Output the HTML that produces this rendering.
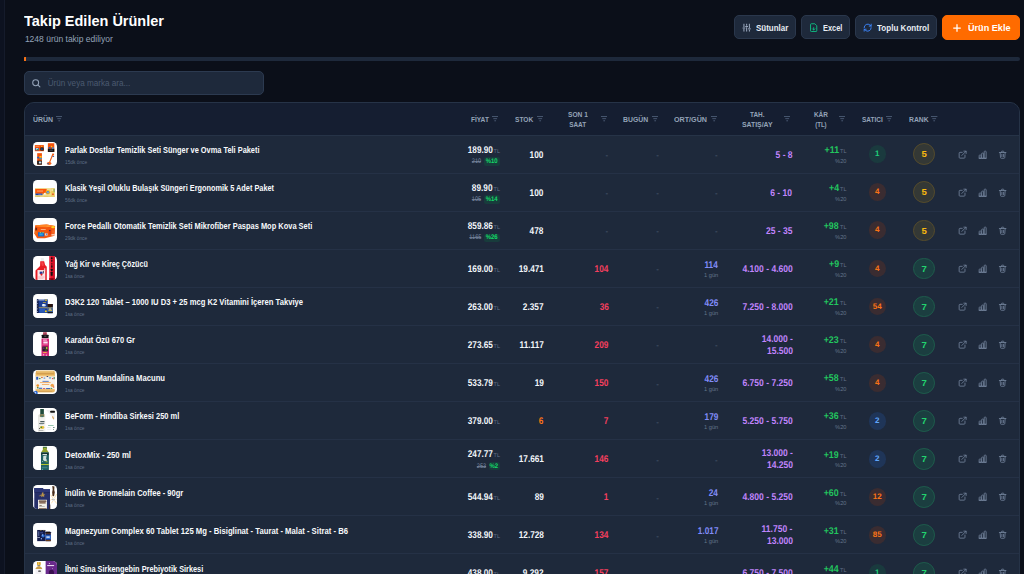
<!DOCTYPE html>
<html lang="tr"><head><meta charset="utf-8"><title>Takip Edilen Ürünler</title>
<style>
*{box-sizing:border-box;margin:0;padding:0}
html,body{width:1024px;height:574px;overflow:hidden;background:#0b0f19}
body{position:relative;font-family:"Liberation Sans",sans-serif;color:#f1f5f9;-webkit-font-smoothing:antialiased}
.t{display:inline-block;white-space:nowrap;transform-origin:0 50%}
.t.r{transform-origin:100% 50%}
.t.ctr{transform-origin:50% 50%}
i,em,u,s,b{font-style:normal;text-decoration:none;font-weight:normal}
.side{position:absolute;left:0;top:0;width:5px;height:574px;background:#0d1220;border-right:1px solid #151b2b}
h1{position:absolute;left:24px;top:12px;font-size:15px;line-height:18px;font-weight:bold;color:#fff;white-space:nowrap}
h1 .t{transform:scaleX(.967)}
.sub{position:absolute;left:24.9px;top:34.2px;font-size:8.5px;line-height:11px;color:#94a3b8;white-space:nowrap}
.btn{position:absolute;top:15px;height:24px;border-radius:5px;background:#1e293b;border:1px solid #2a374c;color:#e8edf4;font-size:9.3px;font-weight:bold;line-height:22px;white-space:nowrap}
.btn svg{position:absolute;top:6.8px;width:9.33px;height:9.33px;fill:none;stroke:#a3b1c6;stroke-width:2.5;stroke-linecap:round;stroke-linejoin:round}
.btn>span{position:absolute;top:.7px}
.btn.or{height:25px;background:#ff6b00;border-color:#ff6b00;color:#fff}
.prog{position:absolute;left:24px;top:57px;width:996px;height:4px;border-radius:.5px 2px 2px .5px;background:#1e293b;overflow:hidden}
.prog i{display:block;width:2px;height:4px;background:#f97316}
.search{position:absolute;left:24px;top:71px;width:240px;height:24px;border-radius:5px;background:#1e293b;border:1px solid #2c3a50}
.search svg{position:absolute;left:6.3px;top:5.6px;width:10.2px;height:10.2px;fill:none;stroke:#94a3b8;stroke-width:2.4;stroke-linecap:round}
.search span{position:absolute;left:22.7px;top:6px;font-size:8.15px;line-height:11px;color:#4b5a70;white-space:nowrap}
.tbl{position:absolute;left:24px;top:102px;width:996px;height:500px;border:1px solid #263347;border-radius:10px;background:#1e293b;overflow:hidden}
.thead{position:absolute;left:-1px;top:-1px;width:996px;height:34px;background:#151e31;border-bottom:1px solid #263347}
.h{position:absolute;font-size:7.3px;line-height:10px;font-weight:bold;color:#94a3b8;white-space:nowrap}
.h2{text-align:center}
.ht{transform:scaleX(.9)}
.fi{position:absolute;top:14.2px;width:6.4px;height:5.33px;fill:none;stroke:#566680;stroke-width:.75}
.row{position:absolute;left:-25px;width:1024px;height:38px;margin-top:-103px}
.sep{position:absolute;left:0;width:996px;height:1px;background:#253146;margin-top:-103px}
.th{position:absolute;left:33.1px;top:5.9px;width:24px;height:24px}
.nm{position:absolute;left:65px;top:9px;font-size:8.5px;line-height:11px;font-weight:bold;color:#f8fafc}
.n{transform:scaleX(.87)}
.ago{position:absolute;left:65px;top:23px;font-size:5.6px;line-height:7px;color:#5f6e86}
.a{transform:scaleX(.86)}
.c{position:absolute;text-align:right;white-space:nowrap;font-size:9.8px;line-height:11px;font-weight:bold;color:#f1f5f9;text-rendering:geometricPrecision}
.p{transform:scaleX(.843)}
.p.pur{transform:scaleX(.87)}
.mid{top:13.5px}
.pr{right:524px}
.pr.up{top:8.5px} .pr.dn{top:21.4px;font-size:6.7px;line-height:8.2px;height:8.2px}
.tl{font-size:5.5px;color:#64738b;margin-left:.8px;font-weight:normal}
s{display:inline-block;position:relative;top:.7px;transform:scaleX(.84);transform-origin:100% 50%;color:#7c8ba4;text-decoration:none;background:linear-gradient(#8897b0,#8897b0) 0 42%/100% .7px no-repeat;font-size:6.7px;margin-right:2.7px;font-weight:normal;vertical-align:top}
.bd{display:inline-block;background:#183c3c;color:#14d868;font-weight:bold;font-size:6.7px;line-height:8.2px;height:8.2px;border-radius:2px;width:15.8px;text-align:center;vertical-align:top}
.bt{transform:scaleX(.9);position:relative;top:.7px}
.st{right:480.5px}
.warn{color:#f97316}
.sn{right:415.29999999999995px}
.red{color:#f43f5e}
em{color:#56657c;font-weight:normal;font-size:8px;position:relative;top:.6px;margin-right:.6px}
.bu{right:364.5px}
.or{right:305.79999999999995px}
.up2{top:9.4px} .dn2{top:20.3px;line-height:8px}
u{font-size:5.7px;color:#64748b;font-weight:normal}
.blu{color:#818cf8}
.ta{right:231.5px}
.pur{color:#c084fc}
.l1{top:7.3px} .l2{top:19.4px}
.ka{right:177.5px}
.up3{top:9px;color:#22c55e} .up3 .tl{margin-left:1px}
.dn3{top:20.6px;line-height:8px}
.k{transform:scaleX(.9)}
.sel{position:absolute;left:868.5px;top:9.3px;width:17.6px;height:17.8px;border-radius:50%;text-align:center;font-size:8px;line-height:18.8px;font-weight:bold;text-rendering:geometricPrecision}
.sg{background:#1a3a3e;color:#1fcf78}
.sel.so{background:#3a2c31;color:#f97316}
.sb{background:#1f3558;color:#60a5fa}
.rk{position:absolute;left:913.3px;top:7.4px;width:21.8px;height:21.8px;border-radius:50%;text-align:center;font-size:9.6px;line-height:19.8px;font-weight:bold;border:1px solid}
.ry{background:#343835;border-color:#564c2c;color:#f7b90f}
.rg{background:#1b3e40;border-color:#1e5c4c;color:#22d36f}
.ic{position:absolute;top:13.6px;width:9.3px;height:9.3px;fill:none;stroke:#71819a;stroke-width:2.2;stroke-linecap:round;stroke-linejoin:round;margin-left:24px}
</style></head><body>
<div class="side"></div>
<h1><span class="t">Takip Edilen Ürünler</span></h1>
<div class="sub">1248 ürün takip ediliyor</div>

<div class="btn" style="left:734px;width:62px"><svg viewBox="0 0 24 24" style="left:7.3px"><path d="M5 3v7M5 16v5M12 3v3M12 12v9M19 3v9M19 18v3M2.500 13h5M9.500 9h5M16.500 15h5"/></svg><span style="left:20.6px"><span class="t" style="transform:scaleX(0.8563)">Sütunlar</span></span></div>
<div class="btn" style="left:800.5px;width:49.5px"><svg viewBox="0 0 24 24" style="left:7.4px;stroke:#10b981"><path d="M14 2H6a2 2 0 0 0-2 2v16a2 2 0 0 0 2 2h12a2 2 0 0 0 2-2V8zM12 18v-6M9 15l3 3 3-3"/></svg><span style="left:21.1px"><span class="t" style="transform:scaleX(0.7985)">Excel</span></span></div>
<div class="btn" style="left:855px;width:82px"><svg viewBox="0 0 24 24" style="left:7.3px;stroke:#3b82f6"><path d="M3 12a9 9 0 0 1 15-6.700L21 8M21 3v5h-5M21 12a9 9 0 0 1-15 6.700L3 16M3 21v-5h5"/></svg><span style="left:21px"><span class="t" style="transform:scaleX(0.8664)">Toplu Kontrol</span></span></div>
<div class="btn or" style="left:942px;width:78px"><svg viewBox="0 0 24 24" style="left:8.3px;top:5.8px;width:12px;height:12px;stroke:#fff;stroke-width:2.5;stroke-linecap:butt"><path d="M12 4.500v15M4.500 12h15"/></svg><span style="left:25px;top:1.2px"><span class="t" style="transform:scaleX(0.9791)">Ürün Ekle</span></span></div>

<div class="prog"><i></i></div>
<div class="search"><svg viewBox="0 0 24 24"><circle cx="11" cy="11" r="7"/><path d="m21 21-4.3-4.3"/></svg><span>Ürün veya marka ara...</span></div>

<div class="tbl">
<div class="thead"><div class="h" style="left:9px;top:13.1px"><span class="t ht" style="transform:scaleX(0.9529)">ÜRÜN</span></div><svg class="fi" viewBox="0 0 6 5" style="left:31.5px"><path d="M0 .5h6M1.200 2.500h3.600M2.200 4.500h1.600"/></svg><div class="h" style="left:446.5px;top:13.1px"><span class="t ht" style="transform:scaleX(0.9006)">FİYAT</span></div><svg class="fi" viewBox="0 0 6 5" style="left:468px"><path d="M0 .5h6M1.200 2.500h3.600M2.200 4.500h1.600"/></svg><div class="h" style="left:490.79999999999995px;top:13.1px"><span class="t ht" style="transform:scaleX(0.9036)">STOK</span></div><svg class="fi" viewBox="0 0 6 5" style="left:512.5px"><path d="M0 .5h6M1.200 2.500h3.600M2.200 4.500h1.600"/></svg><div class="h h2" style="left:523.7px;width:60px;top:8px"><span class="t ht ctr" style="transform:scaleX(0.9084)">SON 1</span></div><div class="h h2" style="left:523.7px;width:60px;top:18px"><span class="t ht ctr" style="transform:scaleX(0.8795)">SAAT</span></div><svg class="fi" viewBox="0 0 6 5" style="left:577px"><path d="M0 .5h6M1.200 2.500h3.600M2.200 4.500h1.600"/></svg><div class="h" style="left:599px;top:13.1px"><span class="t ht" style="transform:scaleX(0.9378)">BUGÜN</span></div><svg class="fi" viewBox="0 0 6 5" style="left:627.6px"><path d="M0 .5h6M1.200 2.500h3.600M2.200 4.500h1.600"/></svg><div class="h" style="left:650px;top:13.1px"><span class="t ht" style="transform:scaleX(0.9805)">ORT/GÜN</span></div><svg class="fi" viewBox="0 0 6 5" style="left:687px"><path d="M0 .5h6M1.200 2.500h3.600M2.200 4.500h1.600"/></svg><div class="h h2" style="left:703px;width:60px;top:8px"><span class="t ht ctr" style="transform:scaleX(0.8857)">TAH.</span></div><div class="h h2" style="left:703px;width:60px;top:18px"><span class="t ht ctr" style="transform:scaleX(0.9460)">SATIŞ/AY</span></div><svg class="fi" viewBox="0 0 6 5" style="left:760px"><path d="M0 .5h6M1.200 2.500h3.600M2.200 4.500h1.600"/></svg><div class="h h2" style="left:767px;width:60px;top:8px"><span class="t ht ctr" style="transform:scaleX(0.8854)">KÂR</span></div><div class="h h2" style="left:767px;width:60px;top:18px"><span class="t ht ctr" style="transform:scaleX(0.8345)">(TL)</span></div><svg class="fi" viewBox="0 0 6 5" style="left:814.6px"><path d="M0 .5h6M1.200 2.500h3.600M2.200 4.500h1.600"/></svg><div class="h" style="left:837.7px;top:13.1px"><span class="t ht" style="transform:scaleX(0.8892)">SATICI</span></div><svg class="fi" viewBox="0 0 6 5" style="left:862px"><path d="M0 .5h6M1.200 2.500h3.600M2.200 4.500h1.600"/></svg><div class="h" style="left:884.6px;top:13.1px"><span class="t ht" style="transform:scaleX(0.9292)">RANK</span></div><svg class="fi" viewBox="0 0 6 5" style="left:907.4px"><path d="M0 .5h6M1.200 2.500h3.600M2.200 4.500h1.600"/></svg></div>
<div class="row" style="top:136.0px"><svg class="th" viewBox="0 0 24 24"><clipPath id="tc0"><rect width="24" height="24" rx="4.3"/></clipPath><rect width="24" height="24" rx="4.3" fill="#fff"/><g clip-path="url(#tc0)"><g transform="translate(-3.07,-3.9) scale(0.05577)"><rect x="88" y="125" width="162" height="110" fill="#f4520a"/><rect x="95" y="178" width="65" height="42" fill="#1f5fbf"/><rect x="108" y="182" width="40" height="28" fill="#e8f0f5"/><rect x="120" y="195" width="30" height="20" fill="#3fa04a"/><rect x="188" y="168" width="58" height="55" fill="#14161c"/><circle cx="215" cy="195" r="15" fill="#1e6fd0"/><circle cx="212" cy="150" r="11" fill="#ffc21e"/><rect x="100" y="140" width="70" height="12" fill="#ffb080"/><rect x="322" y="92" width="115" height="156" fill="#f4520a"/><rect x="322" y="190" width="115" height="58" fill="#111"/><rect x="335" y="160" width="35" height="25" fill="#1f5fbf"/><circle cx="388" cy="150" r="14" fill="#ffc21e"/><rect x="395" y="165" width="30" height="30" fill="#3a8fd8"/><rect x="350" y="205" width="60" height="25" fill="#3a3f4a"/><rect x="130" y="270" width="85" height="205" fill="#f4520a"/><rect x="130" y="335" width="40" height="28" fill="#1f5fbf"/><rect x="170" y="320" width="40" height="30" fill="#ffc21e"/><rect x="175" y="355" width="35" height="25" fill="#2a9be0"/><rect x="130" y="405" width="85" height="70" fill="#15161a"/><rect x="160" y="420" width="45" height="35" fill="#d8dde2"/><path d="M415 282L350 440" stroke="#f4621a" stroke-width="22" stroke-linecap="round"/><ellipse cx="345" cy="455" rx="40" ry="26" fill="#f4621a"/><rect x="312" y="452" width="30" height="16" fill="#1f5fbf"/><circle cx="420" cy="300" r="14" fill="#f4520a"/><rect x="405" y="320" width="28" height="16" fill="#2a4a9a"/></g></g></svg><div class="nm"><span class="t n" style="transform:scaleX(0.8698)">Parlak Dostlar Temizlik Seti Sünger ve Ovma Teli Paketi</span></div><div class="ago"><span class="t a">15dk önce</span></div><div class="c pr up"><span class="t p r">189.90</span><i class="tl">TL</i></div><div class="c pr dn"><s>210</s><b class="bd" style="width:15.8px"><span class="t ctr bt">%10</span></b></div><div class="c st mid"><span class="t p r">100</span></div><div class="c sn mid"><em>-</em></div><div class="c bu mid"><em>-</em></div><div class="c or mid"><em>-</em></div><div class="c ta mid"><span class="t p r pur">5 - 8</span></div><div class="c ka up3"><span class="t k r">+11</span><i class="tl">TL</i></div><div class="c ka dn3"><u>%20</u></div><div class="sel sg"><span class="t sv">1</span></div><div class="rk ry"><span class="t rv">5</span></div><svg class="ic" viewBox="0 0 24 24" style="left:934.3px"><path d="M15 3h6v6M10 14 21 3M18 13v6a2 2 0 0 1-2 2H5a2 2 0 0 1-2-2V8a2 2 0 0 1 2-2h6"/></svg><svg class="ic" viewBox="0 0 24 24" style="left:953.8px"><path d="M3 21v-6.5A1.5 1.5 0 0 1 4.500 13h2A1.500 1.500 0 0 1 8 14.500V21zM9.500 21V9.500A1.500 1.500 0 0 1 11 8h2a1.500 1.500 0 0 1 1.500 1.500V21zM16 21V4.500A1.500 1.500 0 0 1 17.500 3h2A1.500 1.500 0 0 1 21 4.500V21zM3 21h18"/></svg><svg class="ic" viewBox="0 0 24 24" style="left:974.0px"><path d="M3.500 6.500h17M9 6.500V4.500A1.500 1.500 0 0 1 10.500 3h3A1.500 1.500 0 0 1 15 4.500v2M5.500 6.500l1 13a2 2 0 0 0 2 1.800h7a2 2 0 0 0 2-1.800l1-13M10 11v6M14 11v6"/></svg></div>
<div class="row" style="top:174.07px"><svg class="th" viewBox="0 0 24 24"><clipPath id="tc1"><rect width="24" height="24" rx="4.3"/></clipPath><rect width="24" height="24" rx="4.3" fill="#fff"/><g clip-path="url(#tc1)"><g transform="translate(-3.07,-3.9) scale(0.05577)"><rect x="90" y="215" width="355" height="160" fill="#f0dc90"/><rect x="95" y="230" width="205" height="85" fill="#f9560b"/><rect x="125" y="262" width="110" height="11" fill="#ffd9b8"/><rect x="100" y="312" width="125" height="30" fill="#1a3fa8"/><rect x="150" y="322" width="60" height="8" fill="#9ab0f0"/><rect x="380" y="222" width="62" height="150" fill="#efcd5a"/><rect x="425" y="228" width="18" height="62" fill="#7aa36a"/><rect x="385" y="228" width="30" height="40" fill="#f3e3a0"/><circle cx="322" cy="290" r="42" fill="#f7b81c"/><circle cx="322" cy="290" r="24" fill="#2a6fd6"/><circle cx="324" cy="288" r="11" fill="#f7e9b0"/><circle cx="268" cy="315" r="18" fill="#f4f4f4"/><rect x="400" y="312" width="26" height="26" fill="#e63a1e"/><rect x="90" y="352" width="355" height="22" fill="#ead078"/><rect x="120" y="355" width="60" height="10" fill="#c8b25a"/><rect x="250" y="355" width="80" height="10" fill="#d8c268"/></g></g></svg><div class="nm"><span class="t n" style="transform:scaleX(0.8641)">Klasik Yeşil Oluklu Bulaşık Süngeri Ergonomik 5 Adet Paket</span></div><div class="ago"><span class="t a">56dk önce</span></div><div class="c pr up"><span class="t p r">89.90</span><i class="tl">TL</i></div><div class="c pr dn"><s>105</s><b class="bd" style="width:15.8px"><span class="t ctr bt">%14</span></b></div><div class="c st mid"><span class="t p r">100</span></div><div class="c sn mid"><em>-</em></div><div class="c bu mid"><em>-</em></div><div class="c or mid"><em>-</em></div><div class="c ta mid"><span class="t p r pur">6 - 10</span></div><div class="c ka up3"><span class="t k r">+4</span><i class="tl">TL</i></div><div class="c ka dn3"><u>%20</u></div><div class="sel so"><span class="t sv">4</span></div><div class="rk ry"><span class="t rv">5</span></div><svg class="ic" viewBox="0 0 24 24" style="left:934.3px"><path d="M15 3h6v6M10 14 21 3M18 13v6a2 2 0 0 1-2 2H5a2 2 0 0 1-2-2V8a2 2 0 0 1 2-2h6"/></svg><svg class="ic" viewBox="0 0 24 24" style="left:953.8px"><path d="M3 21v-6.5A1.5 1.5 0 0 1 4.500 13h2A1.500 1.500 0 0 1 8 14.500V21zM9.500 21V9.500A1.500 1.500 0 0 1 11 8h2a1.500 1.500 0 0 1 1.500 1.500V21zM16 21V4.500A1.500 1.500 0 0 1 17.500 3h2A1.500 1.500 0 0 1 21 4.500V21zM3 21h18"/></svg><svg class="ic" viewBox="0 0 24 24" style="left:974.0px"><path d="M3.500 6.500h17M9 6.500V4.500A1.500 1.500 0 0 1 10.500 3h3A1.500 1.500 0 0 1 15 4.500v2M5.500 6.500l1 13a2 2 0 0 0 2 1.800h7a2 2 0 0 0 2-1.800l1-13M10 11v6M14 11v6"/></svg></div>
<div class="row" style="top:212.14px"><svg class="th" viewBox="0 0 24 24"><clipPath id="tc2"><rect width="24" height="24" rx="4.3"/></clipPath><rect width="24" height="24" rx="4.3" fill="#fff"/><g clip-path="url(#tc2)"><g transform="translate(-3.07,-3.9) scale(0.05577)"><polygon points="95,200 300,188 452,215 442,388 270,432 130,432 78,350" fill="#f4560e"/><polygon points="100,200 300,188 452,215 300,238 130,226" fill="#ff8424"/><ellipse cx="415" cy="235" rx="34" ry="20" fill="#ffd21e"/><ellipse cx="330" cy="215" rx="40" ry="12" fill="#ff9c3a"/><rect x="92" y="238" width="38" height="70" fill="#c8400a"/><circle cx="113" cy="266" r="13" fill="#1c1c22"/><rect x="92" y="300" width="30" height="60" fill="#e8721e"/><rect x="195" y="268" width="88" height="12" fill="#ffd2b8"/><rect x="145" y="325" width="112" height="76" fill="#1d67c4"/><rect x="178" y="325" width="22" height="16" fill="#c8e03a"/><rect x="225" y="325" width="22" height="16" fill="#c8e03a"/><rect x="168" y="346" width="62" height="36" fill="#2aa3e0"/><rect x="338" y="280" width="42" height="88" fill="#e03a12"/><circle cx="356" cy="296" r="13" fill="#1a2a6b"/><rect x="268" y="345" width="50" height="40" fill="#f0f0f0" opacity="0.8"/><rect x="290" y="350" width="20" height="20" fill="#2a6ad0"/><rect x="385" y="355" width="60" height="30" fill="#ffffff" opacity="0.65"/><rect x="400" y="290" width="35" height="50" fill="#f26a2a"/></g></g></svg><div class="nm"><span class="t n" style="transform:scaleX(0.8774)">Force Pedallı Otomatik Temizlik Seti Mikrofiber Paspas Mop Kova Seti</span></div><div class="ago"><span class="t a">29dk önce</span></div><div class="c pr up"><span class="t p r">859.86</span><i class="tl">TL</i></div><div class="c pr dn"><s>1165</s><b class="bd" style="width:15.8px"><span class="t ctr bt">%26</span></b></div><div class="c st mid"><span class="t p r">478</span></div><div class="c sn mid"><em>-</em></div><div class="c bu mid"><em>-</em></div><div class="c or mid"><em>-</em></div><div class="c ta mid"><span class="t p r pur">25 - 35</span></div><div class="c ka up3"><span class="t k r">+98</span><i class="tl">TL</i></div><div class="c ka dn3"><u>%20</u></div><div class="sel so"><span class="t sv">4</span></div><div class="rk ry"><span class="t rv">5</span></div><svg class="ic" viewBox="0 0 24 24" style="left:934.3px"><path d="M15 3h6v6M10 14 21 3M18 13v6a2 2 0 0 1-2 2H5a2 2 0 0 1-2-2V8a2 2 0 0 1 2-2h6"/></svg><svg class="ic" viewBox="0 0 24 24" style="left:953.8px"><path d="M3 21v-6.5A1.5 1.5 0 0 1 4.500 13h2A1.500 1.500 0 0 1 8 14.500V21zM9.500 21V9.500A1.500 1.500 0 0 1 11 8h2a1.500 1.500 0 0 1 1.500 1.500V21zM16 21V4.500A1.500 1.500 0 0 1 17.500 3h2A1.500 1.500 0 0 1 21 4.500V21zM3 21h18"/></svg><svg class="ic" viewBox="0 0 24 24" style="left:974.0px"><path d="M3.500 6.500h17M9 6.500V4.500A1.500 1.500 0 0 1 10.500 3h3A1.500 1.500 0 0 1 15 4.500v2M5.500 6.500l1 13a2 2 0 0 0 2 1.800h7a2 2 0 0 0 2-1.800l1-13M10 11v6M14 11v6"/></svg></div>
<div class="row" style="top:250.21px"><svg class="th" viewBox="0 0 24 24"><clipPath id="tc3"><rect width="24" height="24" rx="4.3"/></clipPath><rect width="24" height="24" rx="4.3" fill="#fff"/><g clip-path="url(#tc3)"><g transform="translate(-3.07,-3.9) scale(0.05577)"><rect x="345" y="70" width="100" height="440" fill="#e21228"/><rect x="345" y="70" width="22" height="440" fill="#f4566a"/><rect x="425" y="70" width="20" height="440" fill="#c80a20"/><rect x="376" y="92" width="30" height="38" fill="#121212" rx="8"/><rect x="380" y="142" width="26" height="32" fill="#121212" rx="8"/><rect x="382" y="198" width="22" height="26" fill="#121212" rx="6"/><rect x="380" y="238" width="26" height="42" fill="#121212" rx="8"/><rect x="376" y="298" width="32" height="42" fill="#121212" rx="8"/><rect x="372" y="352" width="36" height="72" fill="#121212" rx="10"/><rect x="345" y="465" width="100" height="45" fill="#b80018"/><rect x="370" y="478" width="50" height="14" fill="#3a0a10"/><rect x="195" y="108" width="55" height="55" fill="#ececec"/><polygon points="185,165 255,165 272,232 302,262 302,502 100,502 100,332 182,250" fill="#e81c24"/><polygon points="200,180 240,180 250,240 215,250" fill="#f4444a"/><rect x="135" y="322" width="140" height="180" fill="#fbe6e8"/><rect x="175" y="350" width="52" height="42" fill="#2a3a9a"/><circle cx="207" cy="402" r="20" fill="#e01c24"/><rect x="236" y="335" width="15" height="48" fill="#4a4a4a"/><rect x="150" y="440" width="110" height="14" fill="#f0a0a8"/><rect x="150" y="468" width="90" height="12" fill="#f4b8be"/><rect x="255" y="290" width="20" height="40" fill="#f7c8cc"/></g></g></svg><div class="nm"><span class="t n" style="transform:scaleX(0.8467)">Yağ Kir ve Kireç Çözücü</span></div><div class="ago"><span class="t a">1sa önce</span></div><div class="c pr mid"><span class="t p r">169.00</span><i class="tl">TL</i></div><div class="c st mid"><span class="t p r">19.471</span></div><div class="c sn mid"><span class="t p r red">104</span></div><div class="c bu mid"><em>-</em></div><div class="c or up2"><span class="t p r blu">114</span></div><div class="c or dn2"><u>1 gün</u></div><div class="c ta mid"><span class="t p r pur">4.100 - 4.600</span></div><div class="c ka up3"><span class="t k r">+9</span><i class="tl">TL</i></div><div class="c ka dn3"><u>%20</u></div><div class="sel so"><span class="t sv">4</span></div><div class="rk rg"><span class="t rv">7</span></div><svg class="ic" viewBox="0 0 24 24" style="left:934.3px"><path d="M15 3h6v6M10 14 21 3M18 13v6a2 2 0 0 1-2 2H5a2 2 0 0 1-2-2V8a2 2 0 0 1 2-2h6"/></svg><svg class="ic" viewBox="0 0 24 24" style="left:953.8px"><path d="M3 21v-6.5A1.5 1.5 0 0 1 4.500 13h2A1.500 1.500 0 0 1 8 14.500V21zM9.500 21V9.500A1.500 1.500 0 0 1 11 8h2a1.500 1.500 0 0 1 1.500 1.500V21zM16 21V4.500A1.500 1.500 0 0 1 17.500 3h2A1.500 1.500 0 0 1 21 4.500V21zM3 21h18"/></svg><svg class="ic" viewBox="0 0 24 24" style="left:974.0px"><path d="M3.500 6.500h17M9 6.500V4.500A1.500 1.500 0 0 1 10.500 3h3A1.500 1.500 0 0 1 15 4.500v2M5.500 6.500l1 13a2 2 0 0 0 2 1.800h7a2 2 0 0 0 2-1.800l1-13M10 11v6M14 11v6"/></svg></div>
<div class="row" style="top:288.28px"><svg class="th" viewBox="0 0 24 24"><clipPath id="tc4"><rect width="24" height="24" rx="4.3"/></clipPath><rect width="24" height="24" rx="4.3" fill="#fff"/><g clip-path="url(#tc4)"><g transform="translate(-3.07,-3.9) scale(0.05577)"><rect x="125" y="165" width="195" height="245" fill="#1c3f94"/><rect x="125" y="165" width="32" height="245" fill="#111c4a"/><rect x="133" y="185" width="12" height="14" fill="#dfe6f5"/><rect x="133" y="230" width="12" height="14" fill="#dfe6f5"/><rect x="133" y="280" width="14" height="10" fill="#e8c84a"/><rect x="133" y="330" width="12" height="14" fill="#dfe6f5"/><rect x="133" y="375" width="12" height="14" fill="#dfe6f5"/><rect x="150" y="168" width="112" height="16" fill="#e4e6f0"/><rect x="270" y="170" width="36" height="20" fill="#f2d21e"/><rect x="232" y="218" width="55" height="12" fill="#d9b63a"/><ellipse cx="250" cy="270" rx="36" ry="22" fill="#cfe0f5"/><ellipse cx="240" cy="262" rx="16" ry="12" fill="#ffffff"/><rect x="158" y="310" width="162" height="15" fill="#c9b25a"/><rect x="170" y="330" width="100" height="72" fill="#2a5ab8"/><rect x="270" y="365" width="32" height="30" fill="#f2d21e"/><rect x="312" y="248" width="100" height="165" fill="#1f4fa8" rx="10"/><rect x="314" y="248" width="96" height="56" fill="#2a140c" rx="8"/><rect x="314" y="312" width="96" height="15" fill="#c9a63a"/><rect x="330" y="348" width="70" height="30" fill="#e8c232" opacity="0.8"/><rect x="345" y="330" width="30" height="20" fill="#f0e0a0"/><rect x="314" y="395" width="96" height="18" fill="#1a1208"/></g></g></svg><div class="nm"><span class="t n" style="transform:scaleX(0.8971)">D3K2 120 Tablet – 1000 IU D3 + 25 mcg K2 Vitamini İçeren Takviye</span></div><div class="ago"><span class="t a">1sa önce</span></div><div class="c pr mid"><span class="t p r">263.00</span><i class="tl">TL</i></div><div class="c st mid"><span class="t p r">2.357</span></div><div class="c sn mid"><span class="t p r red">36</span></div><div class="c bu mid"><em>-</em></div><div class="c or up2"><span class="t p r blu">426</span></div><div class="c or dn2"><u>1 gün</u></div><div class="c ta mid"><span class="t p r pur">7.250 - 8.000</span></div><div class="c ka up3"><span class="t k r">+21</span><i class="tl">TL</i></div><div class="c ka dn3"><u>%20</u></div><div class="sel so"><span class="t sv">54</span></div><div class="rk rg"><span class="t rv">7</span></div><svg class="ic" viewBox="0 0 24 24" style="left:934.3px"><path d="M15 3h6v6M10 14 21 3M18 13v6a2 2 0 0 1-2 2H5a2 2 0 0 1-2-2V8a2 2 0 0 1 2-2h6"/></svg><svg class="ic" viewBox="0 0 24 24" style="left:953.8px"><path d="M3 21v-6.5A1.5 1.5 0 0 1 4.500 13h2A1.500 1.500 0 0 1 8 14.500V21zM9.500 21V9.500A1.500 1.500 0 0 1 11 8h2a1.500 1.500 0 0 1 1.500 1.500V21zM16 21V4.500A1.500 1.500 0 0 1 17.500 3h2A1.500 1.500 0 0 1 21 4.500V21zM3 21h18"/></svg><svg class="ic" viewBox="0 0 24 24" style="left:974.0px"><path d="M3.500 6.500h17M9 6.500V4.500A1.500 1.500 0 0 1 10.500 3h3A1.500 1.500 0 0 1 15 4.500v2M5.500 6.500l1 13a2 2 0 0 0 2 1.800h7a2 2 0 0 0 2-1.800l1-13M10 11v6M14 11v6"/></svg></div>
<div class="row" style="top:326.35px"><svg class="th" viewBox="0 0 24 24"><clipPath id="tc5"><rect width="24" height="24" rx="4.3"/></clipPath><rect width="24" height="24" rx="4.3" fill="#fff"/><g clip-path="url(#tc5)"><g transform="translate(-3.07,-3.9) scale(0.05577)"><rect x="235" y="75" width="70" height="48" fill="#c4506a"/><rect x="250" y="75" width="8" height="48" fill="#7a2a3a"/><rect x="275" y="75" width="8" height="48" fill="#7a2a3a"/><rect x="212" y="120" width="122" height="62" fill="#141014" rx="8"/><rect x="255" y="135" width="40" height="20" fill="#5a4a52"/><rect x="212" y="180" width="122" height="10" fill="#f3d6e2"/><rect x="207" y="188" width="135" height="322" fill="#d62a7a"/><rect x="235" y="205" width="70" height="20" fill="#f7c3dc"/><rect x="240" y="240" width="78" height="36" fill="#fbe3ef"/><rect x="225" y="285" width="95" height="14" fill="#e8609c"/><rect x="222" y="330" width="100" height="86" fill="#2a1a2a"/><rect x="285" y="338" width="30" height="42" fill="#a8b83a"/><rect x="232" y="345" width="30" height="28" fill="#5a3a6a"/><rect x="265" y="385" width="40" height="24" fill="#3a5a2a"/><rect x="235" y="430" width="66" height="14" fill="#f2d23a"/><rect x="232" y="468" width="24" height="22" fill="#f7c3dc"/><rect x="285" y="475" width="22" height="20" fill="#f7c3dc"/></g></g></svg><div class="nm"><span class="t n" style="transform:scaleX(0.8821)">Karadut Özü 670 Gr</span></div><div class="ago"><span class="t a">1sa önce</span></div><div class="c pr mid"><span class="t p r">273.65</span><i class="tl">TL</i></div><div class="c st mid"><span class="t p r">11.117</span></div><div class="c sn mid"><span class="t p r red">209</span></div><div class="c bu mid"><em>-</em></div><div class="c or mid"><em>-</em></div><div class="c ta l1"><span class="t p r pur">14.000 -</span></div><div class="c ta l2"><span class="t p r pur">15.500</span></div><div class="c ka up3"><span class="t k r">+23</span><i class="tl">TL</i></div><div class="c ka dn3"><u>%20</u></div><div class="sel so"><span class="t sv">4</span></div><div class="rk rg"><span class="t rv">7</span></div><svg class="ic" viewBox="0 0 24 24" style="left:934.3px"><path d="M15 3h6v6M10 14 21 3M18 13v6a2 2 0 0 1-2 2H5a2 2 0 0 1-2-2V8a2 2 0 0 1 2-2h6"/></svg><svg class="ic" viewBox="0 0 24 24" style="left:953.8px"><path d="M3 21v-6.5A1.5 1.5 0 0 1 4.500 13h2A1.500 1.500 0 0 1 8 14.500V21zM9.500 21V9.500A1.500 1.500 0 0 1 11 8h2a1.500 1.500 0 0 1 1.500 1.500V21zM16 21V4.500A1.500 1.500 0 0 1 17.500 3h2A1.500 1.500 0 0 1 21 4.500V21zM3 21h18"/></svg><svg class="ic" viewBox="0 0 24 24" style="left:974.0px"><path d="M3.500 6.500h17M9 6.500V4.500A1.500 1.500 0 0 1 10.500 3h3A1.500 1.500 0 0 1 15 4.500v2M5.500 6.500l1 13a2 2 0 0 0 2 1.800h7a2 2 0 0 0 2-1.800l1-13M10 11v6M14 11v6"/></svg></div>
<div class="row" style="top:364.42px"><svg class="th" viewBox="0 0 24 24"><clipPath id="tc6"><rect width="24" height="24" rx="4.3"/></clipPath><rect width="24" height="24" rx="4.3" fill="#fff"/><g clip-path="url(#tc6)"><g transform="translate(-3.07,-3.9) scale(0.05577)"><rect x="100" y="85" width="350" height="385" fill="#ecc27a" rx="42"/><rect x="110" y="85" width="330" height="78" fill="#e2ae58" rx="20"/><rect x="130" y="98" width="290" height="12" fill="#f6dca0"/><rect x="120" y="130" width="310" height="10" fill="#c8924a"/><rect x="105" y="160" width="340" height="30" fill="#f0c478"/><rect x="100" y="185" width="350" height="232" fill="#f5f2ec"/><rect x="112" y="192" width="36" height="52" fill="#2a5ab8"/><rect x="160" y="212" width="30" height="22" fill="#5a9a4a"/><rect x="200" y="195" width="30" height="20" fill="#d87a3a"/><rect x="245" y="205" width="30" height="20" fill="#5a8ad0"/><rect x="300" y="180" width="26" height="16" fill="#1c2a6a"/><rect x="340" y="200" width="40" height="24" fill="#6aa0d8"/><rect x="398" y="212" width="22" height="22" fill="#d83a3a"/><rect x="425" y="195" width="20" height="40" fill="#4a8a5a"/><rect x="225" y="265" width="112" height="14" fill="#2a5ab8"/><rect x="180" y="290" width="192" height="14" fill="#f4a04a"/><rect x="215" y="322" width="132" height="14" fill="#f4a04a"/><circle cx="140" cy="350" r="24" fill="#f0922a"/><rect x="125" y="375" width="30" height="25" fill="#5a8a3a"/><circle cx="400" cy="345" r="30" fill="#f0a24a"/><circle cx="425" cy="375" r="14" fill="#d85a3a"/><rect x="160" y="388" width="60" height="20" fill="#3a6ac0"/><rect x="235" y="395" width="40" height="16" fill="#c84a6a"/><rect x="290" y="395" width="72" height="18" fill="#2a5ab8"/><rect x="370" y="390" width="30" height="20" fill="#5a9a4a"/><rect x="112" y="415" width="326" height="52" fill="#e8b866" rx="18"/><rect x="150" y="452" width="250" height="10" fill="#c8924a"/><circle cx="105" cy="478" r="34" fill="#1d5fd0"/><circle cx="100" cy="476" r="14" fill="#dfe8fa"/><circle cx="108" cy="482" r="8" fill="#1d5fd0"/></g></g></svg><div class="nm"><span class="t n" style="transform:scaleX(0.9010)">Bodrum Mandalina Macunu</span></div><div class="ago"><span class="t a">1sa önce</span></div><div class="c pr mid"><span class="t p r">533.79</span><i class="tl">TL</i></div><div class="c st mid"><span class="t p r">19</span></div><div class="c sn mid"><span class="t p r red">150</span></div><div class="c bu mid"><em>-</em></div><div class="c or up2"><span class="t p r blu">426</span></div><div class="c or dn2"><u>1 gün</u></div><div class="c ta mid"><span class="t p r pur">6.750 - 7.250</span></div><div class="c ka up3"><span class="t k r">+58</span><i class="tl">TL</i></div><div class="c ka dn3"><u>%20</u></div><div class="sel so"><span class="t sv">4</span></div><div class="rk rg"><span class="t rv">7</span></div><svg class="ic" viewBox="0 0 24 24" style="left:934.3px"><path d="M15 3h6v6M10 14 21 3M18 13v6a2 2 0 0 1-2 2H5a2 2 0 0 1-2-2V8a2 2 0 0 1 2-2h6"/></svg><svg class="ic" viewBox="0 0 24 24" style="left:953.8px"><path d="M3 21v-6.5A1.5 1.5 0 0 1 4.500 13h2A1.500 1.500 0 0 1 8 14.500V21zM9.500 21V9.500A1.500 1.500 0 0 1 11 8h2a1.500 1.500 0 0 1 1.500 1.500V21zM16 21V4.500A1.500 1.500 0 0 1 17.500 3h2A1.500 1.500 0 0 1 21 4.500V21zM3 21h18"/></svg><svg class="ic" viewBox="0 0 24 24" style="left:974.0px"><path d="M3.500 6.500h17M9 6.500V4.500A1.500 1.500 0 0 1 10.500 3h3A1.500 1.500 0 0 1 15 4.500v2M5.500 6.500l1 13a2 2 0 0 0 2 1.800h7a2 2 0 0 0 2-1.800l1-13M10 11v6M14 11v6"/></svg></div>
<div class="row" style="top:402.49px"><svg class="th" viewBox="0 0 24 24"><clipPath id="tc7"><rect width="24" height="24" rx="4.3"/></clipPath><rect width="24" height="24" rx="4.3" fill="#fff"/><g clip-path="url(#tc7)"><g transform="translate(-3.07,-3.9) scale(0.05577)"><polygon points="290,108 452,108 452,285" fill="#f1f1f1"/><rect x="150" y="182" width="126" height="330" fill="#f3f3ef" rx="10"/><rect x="150" y="195" width="18" height="300" fill="#e2e2dc"/><rect x="185" y="88" width="65" height="96" fill="#1f4a3a"/><rect x="178" y="180" width="80" height="50" fill="#7c7c52"/><rect x="205" y="212" width="30" height="16" fill="#2a7a7a"/><rect x="190" y="238" width="50" height="14" fill="#cfd8d0"/><rect x="185" y="305" width="76" height="20" fill="#3a4a4a"/><rect x="165" y="340" width="92" height="15" fill="#5a6a6a"/><rect x="180" y="365" width="60" height="8" fill="#b0b8b8"/><ellipse cx="218" cy="420" rx="42" ry="26" fill="#e8c03a"/><circle cx="205" cy="415" r="15" fill="#3f8a4a"/><rect x="165" y="432" width="15" height="15" fill="#222"/><rect x="160" y="472" width="82" height="10" fill="#8a8a8a"/><rect x="365" y="120" width="82" height="36" fill="#111" rx="10"/><ellipse cx="415" cy="245" rx="13" ry="32" fill="#d9a86a" transform="rotate(-25 415 245)"/><rect x="325" y="378" width="100" height="14" fill="#7ab89a"/><rect x="310" y="415" width="62" height="10" fill="#c8d8d0"/><rect x="415" y="412" width="26" height="14" fill="#3a6a5a"/><rect x="310" y="450" width="72" height="8" fill="#dde8e2"/><rect x="415" y="450" width="16" height="12" fill="#3a5a5a"/></g></g></svg><div class="nm"><span class="t n" style="transform:scaleX(0.8799)">BeForm - Hindiba Sirkesi 250 ml</span></div><div class="ago"><span class="t a">1sa önce</span></div><div class="c pr mid"><span class="t p r">379.00</span><i class="tl">TL</i></div><div class="c st mid warn"><span class="t p r">6</span></div><div class="c sn mid"><span class="t p r red">7</span></div><div class="c bu mid"><em>-</em></div><div class="c or up2"><span class="t p r blu">179</span></div><div class="c or dn2"><u>1 gün</u></div><div class="c ta mid"><span class="t p r pur">5.250 - 5.750</span></div><div class="c ka up3"><span class="t k r">+36</span><i class="tl">TL</i></div><div class="c ka dn3"><u>%20</u></div><div class="sel sb"><span class="t sv">2</span></div><div class="rk rg"><span class="t rv">7</span></div><svg class="ic" viewBox="0 0 24 24" style="left:934.3px"><path d="M15 3h6v6M10 14 21 3M18 13v6a2 2 0 0 1-2 2H5a2 2 0 0 1-2-2V8a2 2 0 0 1 2-2h6"/></svg><svg class="ic" viewBox="0 0 24 24" style="left:953.8px"><path d="M3 21v-6.5A1.5 1.5 0 0 1 4.500 13h2A1.500 1.500 0 0 1 8 14.500V21zM9.500 21V9.500A1.500 1.500 0 0 1 11 8h2a1.500 1.500 0 0 1 1.500 1.500V21zM16 21V4.500A1.500 1.500 0 0 1 17.500 3h2A1.500 1.500 0 0 1 21 4.500V21zM3 21h18"/></svg><svg class="ic" viewBox="0 0 24 24" style="left:974.0px"><path d="M3.500 6.500h17M9 6.500V4.500A1.500 1.500 0 0 1 10.500 3h3A1.500 1.500 0 0 1 15 4.500v2M5.500 6.500l1 13a2 2 0 0 0 2 1.800h7a2 2 0 0 0 2-1.800l1-13M10 11v6M14 11v6"/></svg></div>
<div class="row" style="top:440.56px"><svg class="th" viewBox="0 0 24 24"><clipPath id="tc8"><rect width="24" height="24" rx="4.3"/></clipPath><rect width="24" height="24" rx="4.3" fill="#fff"/><g clip-path="url(#tc8)"><g transform="translate(-3.07,-3.9) scale(0.05577)"><rect x="232" y="85" width="72" height="54" fill="#7a8f1a"/><rect x="235" y="85" width="66" height="12" fill="#1f6a6a"/><rect x="250" y="105" width="36" height="16" fill="#a8b83a"/><polygon points="232,135 304,135 340,188 198,188" fill="#8fa02a"/><rect x="198" y="184" width="142" height="330" fill="#1f5f60"/><rect x="205" y="190" width="128" height="42" fill="#10302e"/><rect x="225" y="215" width="82" height="18" fill="#e8f0ee"/><polygon points="240,250 300,240 290,300 310,330 265,345 235,320" fill="#cfe0dc"/><rect x="222" y="340" width="14" height="14" fill="#dfeee8"/><rect x="280" y="345" width="36" height="15" fill="#b8cc2a"/><rect x="198" y="395" width="142" height="16" fill="#c8d42a"/><rect x="215" y="440" width="100" height="30" fill="#3a8080"/><rect x="215" y="480" width="20" height="20" fill="#5aa0a0"/></g></g></svg><div class="nm"><span class="t n" style="transform:scaleX(0.9191)">DetoxMix - 250 ml</span></div><div class="ago"><span class="t a">1sa önce</span></div><div class="c pr up"><span class="t p r">247.77</span><i class="tl">TL</i></div><div class="c pr dn"><s>253</s><b class="bd" style="width:11.5px"><span class="t ctr bt">%2</span></b></div><div class="c st mid"><span class="t p r">17.661</span></div><div class="c sn mid"><span class="t p r red">146</span></div><div class="c bu mid"><em>-</em></div><div class="c or mid"><em>-</em></div><div class="c ta l1"><span class="t p r pur">13.000 -</span></div><div class="c ta l2"><span class="t p r pur">14.250</span></div><div class="c ka up3"><span class="t k r">+19</span><i class="tl">TL</i></div><div class="c ka dn3"><u>%20</u></div><div class="sel sb"><span class="t sv">2</span></div><div class="rk rg"><span class="t rv">7</span></div><svg class="ic" viewBox="0 0 24 24" style="left:934.3px"><path d="M15 3h6v6M10 14 21 3M18 13v6a2 2 0 0 1-2 2H5a2 2 0 0 1-2-2V8a2 2 0 0 1 2-2h6"/></svg><svg class="ic" viewBox="0 0 24 24" style="left:953.8px"><path d="M3 21v-6.5A1.5 1.5 0 0 1 4.500 13h2A1.500 1.500 0 0 1 8 14.500V21zM9.500 21V9.500A1.500 1.500 0 0 1 11 8h2a1.500 1.500 0 0 1 1.500 1.500V21zM16 21V4.500A1.500 1.500 0 0 1 17.500 3h2A1.500 1.500 0 0 1 21 4.500V21zM3 21h18"/></svg><svg class="ic" viewBox="0 0 24 24" style="left:974.0px"><path d="M3.500 6.500h17M9 6.500V4.500A1.500 1.500 0 0 1 10.500 3h3A1.500 1.500 0 0 1 15 4.500v2M5.500 6.500l1 13a2 2 0 0 0 2 1.800h7a2 2 0 0 0 2-1.800l1-13M10 11v6M14 11v6"/></svg></div>
<div class="row" style="top:478.63px"><svg class="th" viewBox="0 0 24 24"><clipPath id="tc9"><rect width="24" height="24" rx="4.3"/></clipPath><rect width="24" height="24" rx="4.3" fill="#fff"/><g clip-path="url(#tc9)"><g transform="translate(-3.07,-3.9) scale(0.05577)"><rect x="60" y="300" width="25" height="200" fill="#dfe3f0"/><polygon points="78,122 235,122 240,148 360,148 360,512 78,512" fill="#262f6a"/><rect x="78" y="196" width="282" height="8" fill="#1a2050"/><polygon points="78,122 235,122 240,148 360,148 360,196 78,196" fill="#2c3676"/><polygon points="215,205 245,205 240,235 275,240 250,262 260,290 230,272 200,290 208,258 180,262 178,250 212,240" fill="#b8924a"/><rect x="160" y="262" width="26" height="8" fill="#b8924a"/><rect x="145" y="335" width="160" height="172" fill="#f2efe8"/><rect x="160" y="350" width="135" height="22" fill="#5a3a26" rx="8"/><rect x="165" y="378" width="120" height="22" fill="#6a4630" rx="8"/><rect x="170" y="430" width="42" height="10" fill="#4a3020"/><rect x="165" y="455" width="100" height="8" fill="#7a7a7a"/><rect x="160" y="485" width="140" height="12" fill="#5a3a26"/><rect x="345" y="420" width="20" height="85" fill="#3a2a2a"/><polygon points="400,90 440,95 436,160 446,200 432,272 405,268 398,200 408,150" fill="#4a2e1a"/><path d="M375 250L410 300" stroke="#f2b02a" stroke-width="7" stroke-linecap="round"/><path d="M475 240L440 300" stroke="#f2b02a" stroke-width="7" stroke-linecap="round"/><path d="M370 340L405 320" stroke="#f2b02a" stroke-width="6" stroke-linecap="round"/><path d="M480 400L440 350" stroke="#f2b02a" stroke-width="7" stroke-linecap="round"/><path d="M385 395L410 360" stroke="#f2b02a" stroke-width="6" stroke-linecap="round"/><path d="M460 320L480 330" stroke="#f5c85a" stroke-width="5" stroke-linecap="round"/><circle cx="420" cy="332" r="26" fill="#e2e2e2"/><rect x="405" y="322" width="10" height="10" fill="#555"/><rect x="428" y="322" width="10" height="10" fill="#555"/></g></g></svg><div class="nm"><span class="t n" style="transform:scaleX(0.8881)">İnülin Ve Bromelain Coffee - 90gr</span></div><div class="ago"><span class="t a">1sa önce</span></div><div class="c pr mid"><span class="t p r">544.94</span><i class="tl">TL</i></div><div class="c st mid"><span class="t p r">89</span></div><div class="c sn mid"><span class="t p r red">1</span></div><div class="c bu mid"><em>-</em></div><div class="c or up2"><span class="t p r blu">24</span></div><div class="c or dn2"><u>1 gün</u></div><div class="c ta mid"><span class="t p r pur">4.800 - 5.250</span></div><div class="c ka up3"><span class="t k r">+60</span><i class="tl">TL</i></div><div class="c ka dn3"><u>%20</u></div><div class="sel so"><span class="t sv">12</span></div><div class="rk rg"><span class="t rv">7</span></div><svg class="ic" viewBox="0 0 24 24" style="left:934.3px"><path d="M15 3h6v6M10 14 21 3M18 13v6a2 2 0 0 1-2 2H5a2 2 0 0 1-2-2V8a2 2 0 0 1 2-2h6"/></svg><svg class="ic" viewBox="0 0 24 24" style="left:953.8px"><path d="M3 21v-6.5A1.5 1.5 0 0 1 4.500 13h2A1.500 1.500 0 0 1 8 14.500V21zM9.500 21V9.500A1.500 1.500 0 0 1 11 8h2a1.500 1.500 0 0 1 1.500 1.500V21zM16 21V4.500A1.500 1.500 0 0 1 17.500 3h2A1.500 1.500 0 0 1 21 4.500V21zM3 21h18"/></svg><svg class="ic" viewBox="0 0 24 24" style="left:974.0px"><path d="M3.500 6.500h17M9 6.500V4.500A1.500 1.500 0 0 1 10.500 3h3A1.500 1.500 0 0 1 15 4.500v2M5.500 6.500l1 13a2 2 0 0 0 2 1.800h7a2 2 0 0 0 2-1.800l1-13M10 11v6M14 11v6"/></svg></div>
<div class="row" style="top:516.7px"><svg class="th" viewBox="0 0 24 24"><clipPath id="tc10"><rect width="24" height="24" rx="4.3"/></clipPath><rect width="24" height="24" rx="4.3" fill="#fff"/><g clip-path="url(#tc10)"><g transform="translate(-3.07,-3.9) scale(0.05577)"><rect x="130" y="195" width="148" height="200" fill="#141c4a"/><rect x="180" y="195" width="30" height="8" fill="#c9a63a"/><rect x="235" y="195" width="30" height="8" fill="#c9a63a"/><rect x="148" y="220" width="20" height="82" fill="#5a6aa0"/><circle cx="235" cy="300" r="30" fill="#2a6ad0"/><circle cx="225" cy="285" r="12" fill="#9ac0f5"/><circle cx="205" cy="352" r="12" fill="#9ab8f0"/><rect x="130" y="325" width="50" height="12" fill="#c8d0e8"/><rect x="185" y="235" width="50" height="20" fill="#3a4a8a"/><rect x="278" y="228" width="98" height="168" fill="#1a2a6a" rx="8"/><rect x="285" y="228" width="80" height="36" fill="#1a0f0a" rx="6"/><rect x="280" y="258" width="95" height="10" fill="#7a4a2a"/><rect x="282" y="290" width="92" height="70" fill="#2a6ad0"/><rect x="295" y="310" width="60" height="25" fill="#dfe8f8"/><rect x="280" y="375" width="95" height="20" fill="#6a3a1a"/><rect x="100" y="503" width="340" height="14" fill="#d9b040"/></g></g></svg><div class="nm"><span class="t n" style="transform:scaleX(0.9060)">Magnezyum Complex 60 Tablet 125 Mg - Bisiglinat - Taurat - Malat - Sitrat - B6</span></div><div class="ago"><span class="t a">1sa önce</span></div><div class="c pr mid"><span class="t p r">338.90</span><i class="tl">TL</i></div><div class="c st mid"><span class="t p r">12.728</span></div><div class="c sn mid"><span class="t p r red">134</span></div><div class="c bu mid"><em>-</em></div><div class="c or up2"><span class="t p r blu">1.017</span></div><div class="c or dn2"><u>1 gün</u></div><div class="c ta l1"><span class="t p r pur">11.750 -</span></div><div class="c ta l2"><span class="t p r pur">13.000</span></div><div class="c ka up3"><span class="t k r">+31</span><i class="tl">TL</i></div><div class="c ka dn3"><u>%20</u></div><div class="sel so"><span class="t sv">85</span></div><div class="rk rg"><span class="t rv">7</span></div><svg class="ic" viewBox="0 0 24 24" style="left:934.3px"><path d="M15 3h6v6M10 14 21 3M18 13v6a2 2 0 0 1-2 2H5a2 2 0 0 1-2-2V8a2 2 0 0 1 2-2h6"/></svg><svg class="ic" viewBox="0 0 24 24" style="left:953.8px"><path d="M3 21v-6.5A1.5 1.5 0 0 1 4.500 13h2A1.500 1.500 0 0 1 8 14.500V21zM9.500 21V9.500A1.500 1.500 0 0 1 11 8h2a1.500 1.500 0 0 1 1.500 1.500V21zM16 21V4.500A1.500 1.500 0 0 1 17.500 3h2A1.500 1.500 0 0 1 21 4.500V21zM3 21h18"/></svg><svg class="ic" viewBox="0 0 24 24" style="left:974.0px"><path d="M3.500 6.500h17M9 6.500V4.500A1.500 1.500 0 0 1 10.500 3h3A1.500 1.500 0 0 1 15 4.500v2M5.500 6.500l1 13a2 2 0 0 0 2 1.800h7a2 2 0 0 0 2-1.800l1-13M10 11v6M14 11v6"/></svg></div>
<div class="row" style="top:554.77px"><svg class="th" viewBox="0 0 24 24"><clipPath id="tc11"><rect width="24" height="24" rx="4.3"/></clipPath><rect width="24" height="24" rx="4.3" fill="#fff"/><g clip-path="url(#tc11)"><rect x="12.83" y="0" width="11.2" height="24" fill="#6a2a8c"/><rect x="12.3" y="0" width="0.7" height="24" fill="#b8a0cc"/><rect x="14.2" y="4" width="6.9" height="1.1" fill="#e8d8f0"/><circle cx="16.3" cy="2.4" r="0.5" fill="#fff"/><ellipse cx="18.4" cy="12" rx="2.6" ry="3.2" fill="#3a1050"/><rect x="19" y="7" width="1" height="1" fill="#a070c0"/><rect x="4.0" y="1.1" width="3.7" height="2.8" fill="#d9a62a"/><rect x="5" y="1.1" width="0.8" height="2.8" fill="#f0cf6a"/><rect x="4.4" y="4" width="2.9" height="0.9" fill="#7a7a7a"/><rect x="4.6" y="4.9" width="2.5" height="0.8" fill="#c9a04a"/><polygon points="2.3,8.1 3.5,6.2 5,5.6 7,5.6 8.4,6.2 9.4,8.1" fill="#c9a04a"/><rect x="2.5" y="8.1" width="7" height="16" fill="#f3f1f5"/><rect x="5.2" y="9.5" width="2.7" height="1.3" fill="#3a3a3a" rx="0.5"/><rect x="3" y="13" width="4" height="1.2" fill="#d8c8f0"/></g></svg><div class="nm"><span class="t n" style="transform:scaleX(0.8630)">İbni Sina Sirkengebin Prebiyotik Sirkesi</span></div><div class="ago"><span class="t a">1sa önce</span></div><div class="c pr mid"><span class="t p r">438.00</span><i class="tl">TL</i></div><div class="c st mid"><span class="t p r">9.292</span></div><div class="c sn mid"><span class="t p r red">157</span></div><div class="c bu mid"><em>-</em></div><div class="c or mid"><em>-</em></div><div class="c ta mid"><span class="t p r pur">6.750 - 7.500</span></div><div class="c ka up3"><span class="t k r">+44</span><i class="tl">TL</i></div><div class="c ka dn3"><u>%20</u></div><div class="sel sg"><span class="t sv">1</span></div><div class="rk rg"><span class="t rv">7</span></div><svg class="ic" viewBox="0 0 24 24" style="left:934.3px"><path d="M15 3h6v6M10 14 21 3M18 13v6a2 2 0 0 1-2 2H5a2 2 0 0 1-2-2V8a2 2 0 0 1 2-2h6"/></svg><svg class="ic" viewBox="0 0 24 24" style="left:953.8px"><path d="M3 21v-6.5A1.5 1.5 0 0 1 4.500 13h2A1.500 1.500 0 0 1 8 14.500V21zM9.500 21V9.500A1.500 1.500 0 0 1 11 8h2a1.500 1.500 0 0 1 1.500 1.500V21zM16 21V4.500A1.500 1.500 0 0 1 17.500 3h2A1.500 1.500 0 0 1 21 4.500V21zM3 21h18"/></svg><svg class="ic" viewBox="0 0 24 24" style="left:974.0px"><path d="M3.500 6.500h17M9 6.500V4.500A1.500 1.500 0 0 1 10.500 3h3A1.500 1.500 0 0 1 15 4.500v2M5.500 6.500l1 13a2 2 0 0 0 2 1.800h7a2 2 0 0 0 2-1.800l1-13M10 11v6M14 11v6"/></svg></div><div class="sep" style="top:173px"></div><div class="sep" style="top:211px"></div><div class="sep" style="top:249px"></div><div class="sep" style="top:287px"></div><div class="sep" style="top:325px"></div><div class="sep" style="top:363px"></div><div class="sep" style="top:401px"></div><div class="sep" style="top:439px"></div><div class="sep" style="top:477px"></div><div class="sep" style="top:515px"></div><div class="sep" style="top:553px"></div>
</div>
</body></html>
